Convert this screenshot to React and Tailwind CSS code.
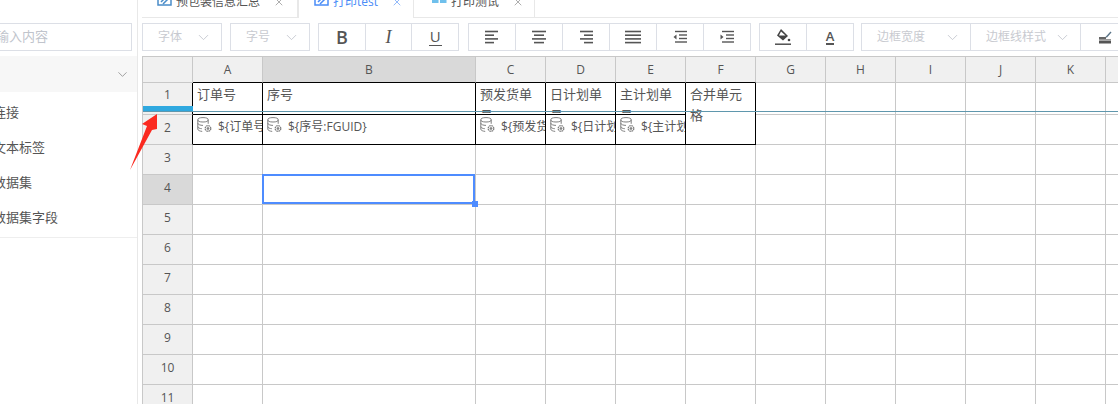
import React from "react";
import { ChevronDown, X } from "lucide-react";

const font = { fontFamily: '"Open Sans","Noto Sans CJK SC",sans-serif' };
const columns = ["A","B","C","D","E","F","G","H","I","J","K","L"];
const gridCols = "grid-cols-[50px_70px_213px_70px_70px_70px_70px_70px_70px_70px_70px_70px_70px]";

function Select({ label, w, joined }) {
  return (
    <div className={`flex h-[28px] items-center justify-between whitespace-nowrap pl-[15px] pr-[9px] text-[12px] text-[#c8cad0] ${w} ${joined ? "border-r border-[#dcdfe6]" : "border border-[#dcdfe6]"}`}>
      <span>{label}</span>
      <ChevronDown size={17} strokeWidth={1.2} className="text-[#c0c4cc]" />
    </div>
  );
}

function Lines({ rows }) {
  return (
    <svg width="18" height="18" viewBox="0 0 18 18" stroke="#555" strokeWidth="1.6">
      {rows.map((r, i) => <line key={i} x1={r[0]} x2={r[1]} y1={3.5 + i * 3.7} y2={3.5 + i * 3.7} />)}
    </svg>
  );
}

function Indent({ right }) {
  return (
    <svg width="14" height="14" viewBox="0 0 14 14" stroke="#555" strokeWidth="1.4">
      <line x1="2" x2="14" y1="1.5" y2="1.5" />
      <line x1="6" x2="14" y1="5" y2="5" />
      <line x1="6" x2="14" y1="8.5" y2="8.5" />
      <line x1="2" x2="14" y1="12" y2="12" />
      <path d={right ? "M0.5 4.5 L3.5 7 L0.5 9.5 Z" : "M3.5 4.5 L0.5 7 L3.5 9.5 Z"} fill="#555" stroke="none" />
    </svg>
  );
}

function Cell({ children }) {
  return (
    <div className="flex h-[26px] flex-1 items-center justify-center border-r border-[#dcdfe6] last:border-r-0">
      {children}
    </div>
  );
}

function DbIcon() {
  return (
    <svg width="15" height="16" viewBox="0 0 15 16" fill="none" stroke="#808080" strokeWidth="1" className="shrink-0">
      <ellipse cx="6" cy="2.8" rx="5.2" ry="2.2" />
      <path d="M0.8 2.8v9.4c0 1.2 2.2 2 4.4 2.2M11.2 2.8v4M0.8 6.2c0 1.2 2.4 2.2 5.2 2.2M0.8 9.6c0 1.2 2 2 4 2.1" />
      <circle cx="11" cy="11.5" r="2.8" strokeWidth="1.3" strokeDasharray="1.6 0.6" />
      <circle cx="11" cy="11.5" r="0.9" fill="#808080" />
    </svg>
  );
}

function Tab({ icon, label, active, w, pad }) {
  return (
    <div className={`flex h-[18px] items-start overflow-visible border-r border-[#e8e8e8] ${w} ${pad} ${active ? "border-l text-[#4a8cf7]" : "border-b text-[#555]"}`}>
      <div className="-mt-[8px] flex h-[20px] items-center">
        {icon}
        <span className="ml-[4px] whitespace-nowrap text-[12px] leading-[20px]">{label}</span>
        <X size={12} strokeWidth={1.2} className={`ml-[13px] ${active ? "text-[#4a8cf7]" : "text-[#777]"}`} />
      </div>
    </div>
  );
}

function TabPic({ color }) {
  return (
    <svg width="15" height="14" viewBox="0 0 15 14" fill="none" stroke={color} strokeWidth="1.5" className="-mt-[2px]">
      <rect x="1" y="0" width="13" height="11" />
      <path d="M4 8l5-5 2 2-5 5" />
    </svg>
  );
}

function Grid2() {
  return (
    <svg width="15" height="8" viewBox="0 0 15 8" fill="#6fc0ec" className="-mt-[6px]">
      <rect x="0" y="0" width="6.5" height="8" />
      <rect x="8" y="0" width="6.5" height="8" />
    </svg>
  );
}

function DataCell({ text }) {
  return (
    <div className="flex h-[30px] items-start overflow-hidden border-r border-b border-black pl-[4px] pt-[2px] text-[12px] leading-[17px] text-[#555]">
      <DbIcon />
      <span className="ml-[6px] mt-[1px] whitespace-nowrap">{text}</span>
    </div>
  );
}

function HeadCell({ text }) {
  return (
    <div className="h-[32px] overflow-hidden border-r border-b border-black px-[4px] pt-[1px] text-[13px] leading-[21px] text-[#555]">
      {text}
    </div>
  );
}

export default function App() {
  const rows = [3, 4, 5, 6, 7, 8, 9, 10, 11];
  return (
    <div style={font} className="relative flex h-[404px] w-[1118px] overflow-hidden bg-white text-[#555]">
      <aside className="flex h-full w-[138px] shrink-0 flex-col overflow-hidden border-r border-[#e8e8e8]">
        <div className="pt-[23px]">
          <div className="-ml-[20px] flex h-[28px] w-[152px] items-center border border-[#dcdfe6] pl-[2px] text-[13px] text-[#c0c4cc]">请输入内容</div>
        </div>
        <div className="mt-[5px] flex h-[36px] items-center justify-end bg-[#f7f7f7] pr-[7px]">
          <ChevronDown size={15} strokeWidth={1.1} className="text-[#777]" />
        </div>
        <div className="flex flex-col border-b border-[#eeeeee] pb-[2px] pt-[3px]">
          {["连接","文本标签","数据集","数据集字段"].map((t) => (
            <div key={t} className="flex h-[35px] items-center whitespace-nowrap text-[13px] text-[#555]">
              <span className="-ml-[7px]">{t}</span>
            </div>
          ))}
        </div>
      </aside>
      <div className="w-[4px] shrink-0" />
      <main className="flex min-w-0 flex-1 flex-col">
        <div className="flex h-[18px] shrink-0">
          <Tab w="w-[156px]" pad="pl-[15px]" icon={<TabPic color="#4a8cc8" />} label="预包装信息汇总" />
          <Tab w="w-[116px]" pad="pl-[15px]" active icon={<TabPic color="#4a8cf7" />} label="打印test" />
          <Tab w="w-[121px]" pad="pl-[18px]" icon={<Grid2 />} label="打印测试" />
          <div className="flex-1 border-b border-[#e8e8e8]" />
        </div>
        <div className="flex h-[38px] shrink-0 items-start pt-[5px] text-[#555]">
          <Select label="字体" w="w-[80px]" />
          <div className="w-[8px]" />
          <Select label="字号" w="w-[80px]" />
          <div className="ml-[8px] flex w-[141px] border border-[#dcdfe6]">
            <Cell><span className="text-[18px] font-semibold">B</span></Cell>
            <Cell><span className="text-[18px] italic" style={{ fontFamily: '"Liberation Serif",serif' }}>I</span></Cell>
            <Cell><span className="border-b border-[#555] px-[1px] text-[15px] leading-[17px]">U</span></Cell>
          </div>
          <div className="ml-[9px] flex w-[283px] border border-[#dcdfe6]">
            <Cell><Lines rows={[[2,15],[2,11],[2,15],[2,11]]} /></Cell>
            <Cell><Lines rows={[[2,16],[4,14],[2,16],[4,14]]} /></Cell>
            <Cell><Lines rows={[[3,16],[7,16],[3,16],[7,16]]} /></Cell>
            <Cell><Lines rows={[[1,17],[1,17],[1,17],[1,17]]} /></Cell>
            <Cell><Indent /></Cell>
            <Cell><Indent right /></Cell>
          </div>
          <div className="ml-[8px] flex w-[95px] border border-[#dcdfe6]">
            <Cell>
              <svg width="17" height="18" viewBox="0 0 17 18">
                <path d="M6 1 L13 8 L8 12.5 L2 7.5 Z" fill="#444" />
                <path d="M6 3.5 L10.5 7.5 L4 7.5 Z" fill="#fff" />
                <circle cx="14" cy="12" r="1.3" fill="#444" />
                <rect x="0" y="15.5" width="16" height="1.4" fill="#444" />
              </svg>
            </Cell>
            <Cell><span className="border-b-2 border-[#555] text-[13px] font-semibold leading-[14px]">A</span></Cell>
          </div>
          <div className="ml-[7px] flex h-[28px] min-w-0 flex-1 border border-r-0 border-[#dcdfe6] [&>div]:h-[26px]">
            <Select label="边框宽度" w="w-[109px]" joined />
            <Select label="边框线样式" w="w-[110px]" joined />
            <div className="flex flex-1 items-center pl-[18px]">
              <svg width="13" height="13" viewBox="0 0 13 13">
                <path d="M6 6.5 L11.5 0.5 L12.5 1.5 L8 6.5 Z" fill="#5a7488" />
                <rect x="0" y="6" width="7" height="2" fill="#666" />
                <rect x="0" y="8" width="12" height="1" fill="#999" />
                <rect x="0" y="9.5" width="12" height="3" fill="#555" />
              </svg>
            </div>
          </div>
        </div>
        <div className="relative min-h-0 flex-1 overflow-hidden border-l border-t border-[#c8c8c8]">
          <div className={`grid ${gridCols} text-center`}>
            <div className="h-[26px] border-r border-b border-[#c8c8c8] bg-[#f0f0f0]" />
            {columns.map((c, i) => (
              <div key={c} className={`h-[26px] border-r border-b text-[12px] leading-[25px] text-[#555] ${i < 6 ? "border-b-black" : "border-b-[#c8c8c8]"} border-r-[#c8c8c8] ${c === "B" ? "bg-[#d9d9d9]" : "bg-[#f0f0f0]"}`}>{c}</div>
            ))}
          </div>
          <div className={`grid ${gridCols} grid-rows-[32px_30px]`}>
            <div className="h-[32px] border-r border-b border-r-black border-b-[#c8c8c8] bg-[#f0f0f0] text-center text-[12px] leading-[23px]">1</div>
            <HeadCell text="订单号" />
            <HeadCell text="序号" />
            <HeadCell text="预发货单号" />
            <HeadCell text="日计划单号" />
            <HeadCell text="主计划单号" />
            <div className="row-span-2 overflow-hidden border-r border-b border-black px-[4px] pt-[1px] text-[13px] leading-[21px] text-[#555]">合并单元格</div>
            {[0,1,2,3,4,5].map((i) => <div key={i} className="h-[32px] border-r border-b border-[#c8c8c8]" />)}
            <div className="h-[30px] border-r border-b border-r-black border-b-[#c8c8c8] bg-[#f0f0f0] text-center text-[12px] leading-[25px]">2</div>
            <DataCell text="${订单号:FGUID}" />
            <DataCell text="${序号:FGUID}" />
            <DataCell text="${预发货单号:FGUID}" />
            <DataCell text="${日计划单号:FGUID}" />
            <DataCell text="${主计划单号:FGUID}" />
            {[0,1,2,3,4,5].map((i) => <div key={i} className="h-[30px] border-r border-b border-[#c8c8c8]" />)}
          </div>
          {rows.map((r) => (
            <div key={r} className={`grid h-[30px] ${gridCols}`}>
              <div className={`border-r border-b border-[#c8c8c8] text-center text-[12px] leading-[25px] ${r === 4 ? "bg-[#d9d9d9]" : "bg-[#f0f0f0]"}`}>{r}</div>
              {columns.map((c) => (
                <div key={c} className={`border-r border-b border-[#c8c8c8] ${r === 4 && c === "B" ? "relative z-10" : ""}`}>
                  {r === 4 && c === "B" && (
                    <div className="absolute -left-px -top-px h-[30px] w-[213px] border-2 border-[#4e8cff]">
                      <div className="absolute -bottom-[5px] -right-[5px] size-[6px] bg-[#4e8cff]" />
                    </div>
                  )}
                </div>
              ))}
            </div>
          ))}
          <div className="absolute left-0 top-[49px] h-[5px] w-[50px] bg-[#2fa8df]" />
          <div className="absolute left-0 right-0 top-[54px] h-px bg-[#5f97ad]" />
        </div>
      </main>
      <svg width="32" height="60" viewBox="0 0 32 60" className="absolute left-[129px] top-[112px]">
        <path d="M28 2 L13 12 L18 14 L1 58 L23 18 L28 17 Z" fill="#fb2a20" />
      </svg>
    </div>
  );
}
